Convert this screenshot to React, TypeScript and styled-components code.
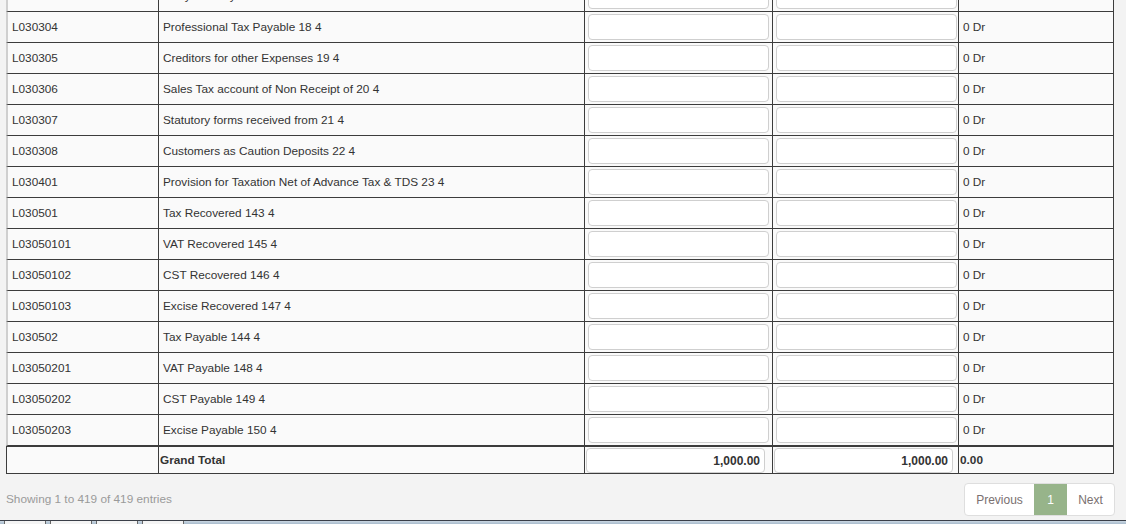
import React from "react";
import styled, { createGlobalStyle } from "styled-components";

const GlobalStyle = createGlobalStyle`
  html, body {
    margin: 0;
    padding: 0;
    background: #f3f3f3;
    font-family: "Liberation Sans", Arial, sans-serif;
    overflow: hidden;
  }
`;

const Page = styled.div`
  height: 524px;
  display: flex;
  flex-direction: column;
  overflow: hidden;
`;

const TableWrap = styled.div`
  padding-left: 6px;
  margin-top: -19px;
`;

const Table = styled.table`
  border-collapse: separate;
  border-spacing: 0;
  table-layout: fixed;
  width: 1108px;
  font-size: 11.8px;
  color: #333;
  background: #fafafa;
`;

const Row = styled.tr`
  height: 31px;
`;

const Cell = styled.td<{ $first?: boolean; $pad?: boolean }>`
  border-right: 1px solid #3c3c3c;
  border-bottom: 1px solid #3c3c3c;
  border-left: ${(p) => (p.$first ? "2px solid #cfcfcf" : "none")};
  padding: ${(p) => (p.$pad ? "2px 3px" : "0 4px")};
  white-space: nowrap;
  overflow: hidden;
  vertical-align: middle;
`;

const TotalRow = styled.tr`
  height: 27px;
`;

const TotalCell = styled.td<{ $first?: boolean; $pad?: boolean }>`
  border-top: 1px solid #3c3c3c;
  border-right: 1px solid #3c3c3c;
  border-bottom: 1px solid #3c3c3c;
  border-left: ${(p) => (p.$first ? "1px solid #3c3c3c" : "none")};
  padding: ${(p) => (p.$pad ? "1px 1px 0" : "0 1px")};
  font-weight: bold;
  vertical-align: middle;
  white-space: nowrap;
`;

const Input = styled.input<{ $total?: boolean }>`
  box-sizing: border-box;
  display: block;
  width: ${(p) => (p.$total ? "179px" : "181px")};
  height: ${(p) => (p.$total ? "25px" : "26px")};
  border: 1px solid #cfcfcf;
  border-radius: 4px;
  background: #fff;
  font-family: "Liberation Sans", Arial, sans-serif;
  font-size: 12px;
  font-weight: ${(p) => (p.$total ? "bold" : "normal")};
  color: #333;
  text-align: right;
  padding: 0 4px;
  outline: none;
`;

const Footer = styled.div`
  display: flex;
  justify-content: space-between;
  align-items: center;
  padding: 9px 11px 0 6px;
`;

const Info = styled.div`
  font-size: 11.8px;
  color: #9a9a9a;
  margin-top: -2px;
`;

const Pager = styled.div`
  display: flex;
  height: 31px;
  border: 1px solid #dedede;
  border-radius: 4px;
  background: #fff;
  overflow: hidden;
`;

const PageItem = styled.div<{ $active?: boolean; $w: number }>`
  width: ${(p) => p.$w}px;
  display: flex;
  align-items: center;
  justify-content: center;
  font-size: 12px;
  color: ${(p) => (p.$active ? "#fff" : "#7a7070")};
  background: ${(p) => (p.$active ? "#97b48a" : "transparent")};
`;

const Taskbar = styled.div`
  margin-top: auto;
  height: 3px;
  border-top: 1px solid #3a3f48;
  background: linear-gradient(#c9d6e2, #a9bccc);
  display: flex;
`;

const TaskTab = styled.div<{ $w: number }>`
  width: ${(p) => p.$w}px;
  margin-left: 4px;
  background: #f4f4f4;
  border-left: 1px solid #666;
  border-right: 1px solid #666;
`;

const rows: [string, string][] = [
  ["L030303", "Entry Tax Payable 17 4"],
  ["L030304", "Professional Tax Payable 18 4"],
  ["L030305", "Creditors for other Expenses 19 4"],
  ["L030306", "Sales Tax account of Non Receipt of 20 4"],
  ["L030307", "Statutory forms received from 21 4"],
  ["L030308", "Customers as Caution Deposits 22 4"],
  ["L030401", "Provision for Taxation Net of Advance Tax & TDS 23 4"],
  ["L030501", "Tax Recovered 143 4"],
  ["L03050101", "VAT Recovered 145 4"],
  ["L03050102", "CST Recovered 146 4"],
  ["L03050103", "Excise Recovered 147 4"],
  ["L030502", "Tax Payable 144 4"],
  ["L03050201", "VAT Payable 148 4"],
  ["L03050202", "CST Payable 149 4"],
  ["L03050203", "Excise Payable 150 4"],
];

export default function App() {
  return (
    <Page>
      <GlobalStyle />
      <TableWrap>
        <Table>
          <colgroup>
            <col style={{ width: 153 }} />
            <col style={{ width: 426 }} />
            <col style={{ width: 188 }} />
            <col style={{ width: 186 }} />
            <col style={{ width: 155 }} />
          </colgroup>
          <tbody>
            {rows.map(([code, name]) => (
              <Row key={code}>
                <Cell $first>{code}</Cell>
                <Cell>{name}</Cell>
                <Cell $pad>
                  <Input readOnly />
                </Cell>
                <Cell $pad>
                  <Input readOnly />
                </Cell>
                <Cell>0 Dr</Cell>
              </Row>
            ))}
            <TotalRow>
              <TotalCell $first />
              <TotalCell>Grand Total</TotalCell>
              <TotalCell $pad>
                <Input $total readOnly value="1,000.00" />
              </TotalCell>
              <TotalCell $pad>
                <Input $total readOnly value="1,000.00" />
              </TotalCell>
              <TotalCell>0.00</TotalCell>
            </TotalRow>
          </tbody>
        </Table>
      </TableWrap>
      <Footer>
        <Info>Showing 1 to 419 of 419 entries</Info>
        <Pager>
          <PageItem $w={69}>Previous</PageItem>
          <PageItem $w={33} $active>
            1
          </PageItem>
          <PageItem $w={47}>Next</PageItem>
        </Pager>
      </Footer>
      <Taskbar>
        <TaskTab $w={40} />
        <TaskTab $w={40} />
        <TaskTab $w={40} />
        <TaskTab $w={40} />
      </Taskbar>
    </Page>
  );
}
